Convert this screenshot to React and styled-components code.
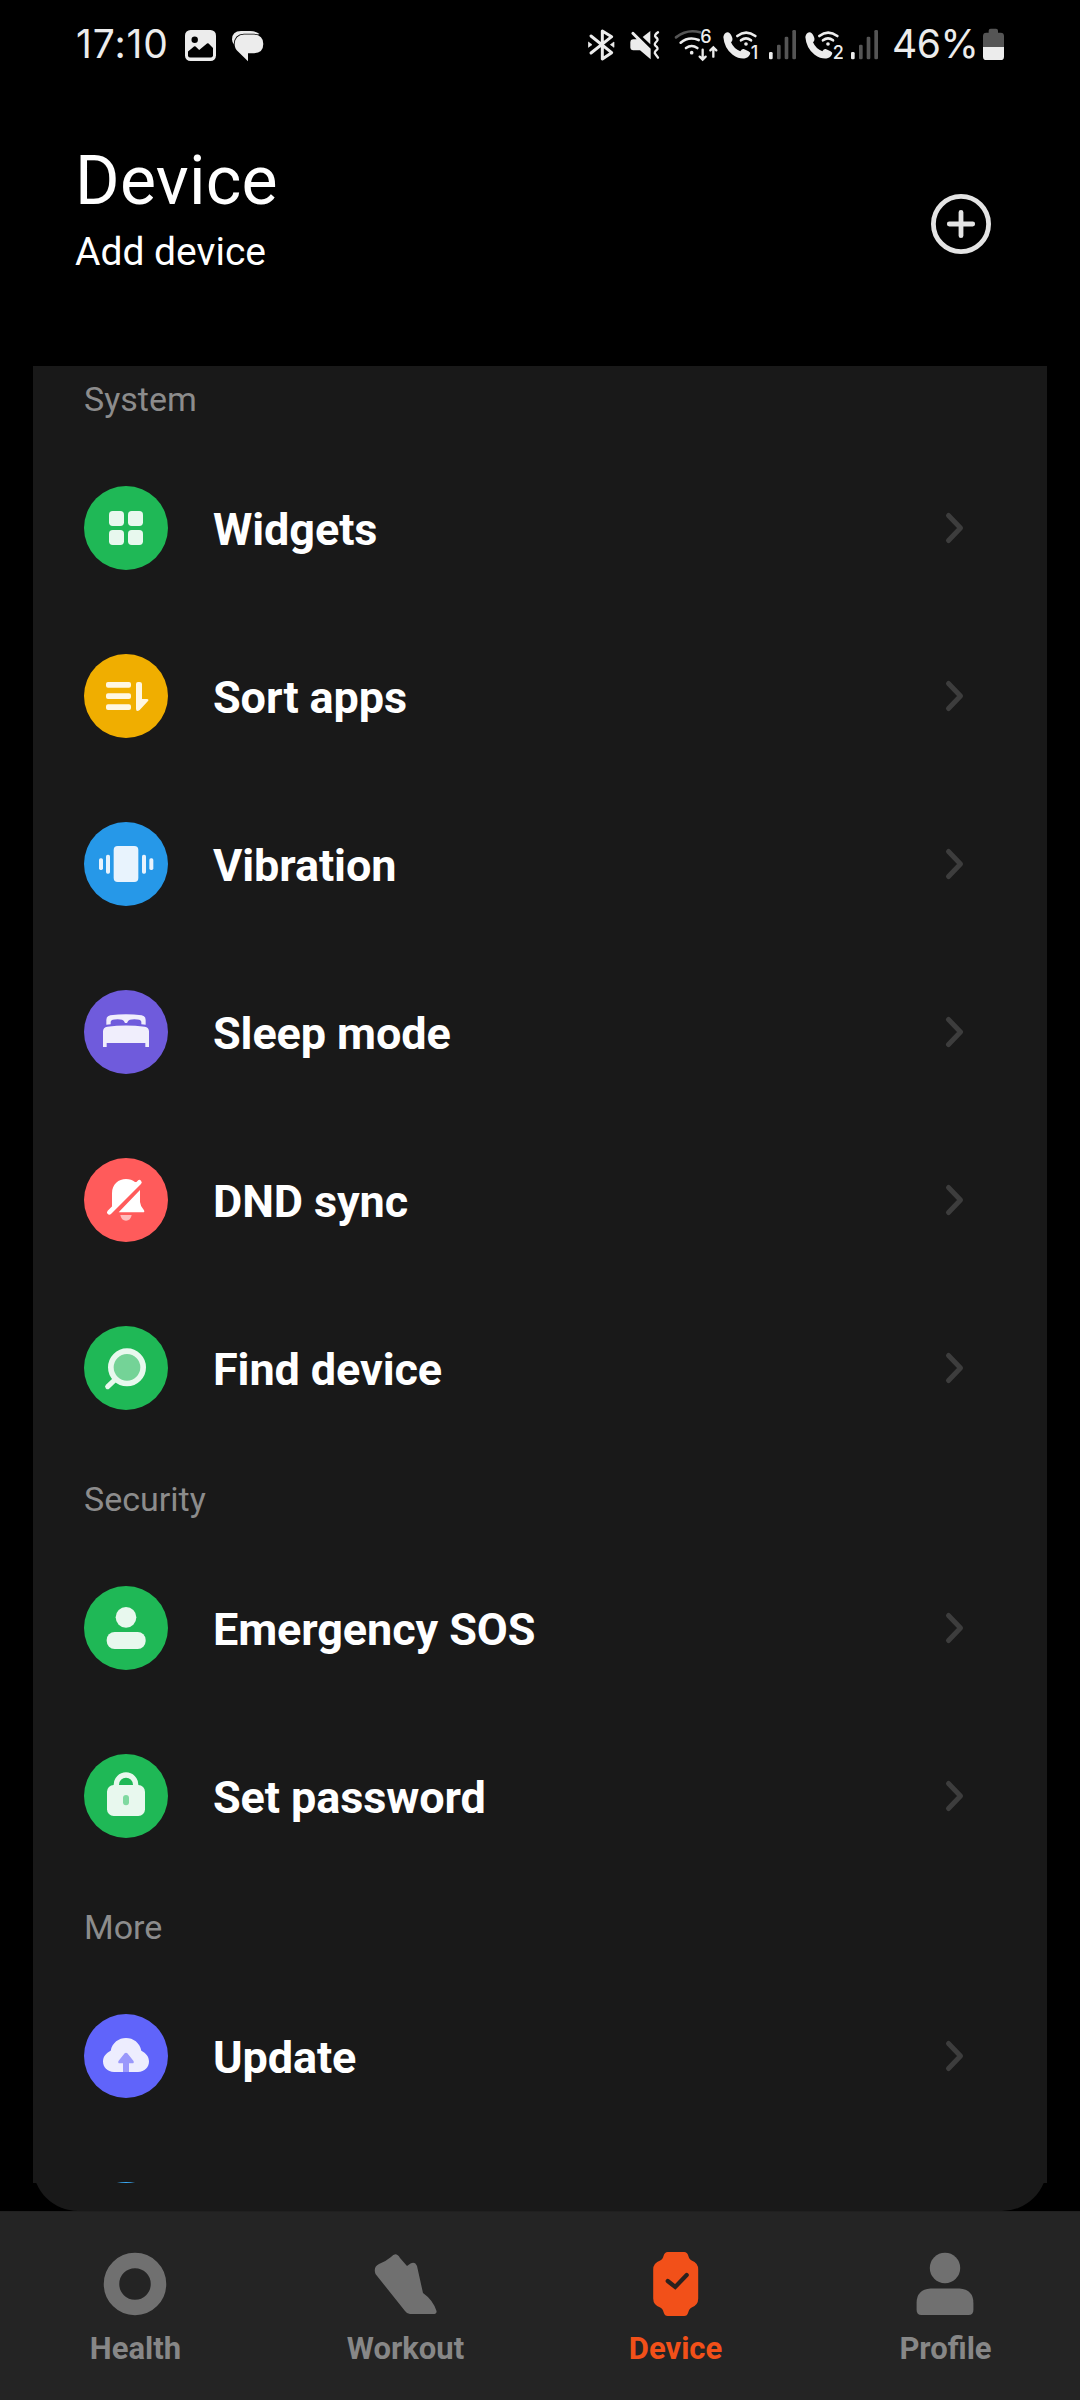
import React, { useState } from "react"
import styled, { createGlobalStyle } from "styled-components"

const GlobalStyle = createGlobalStyle`
   * { box-sizing: border-box; }
   body {
      margin: 0;
      background-color: #000;
      font-family: Roboto, "Liberation Sans", sans-serif;
   }
   svg { display: block; flex-shrink: 0; }
`

const LIGHT = "#ececec"
const DIM = "#555"
const MINT = "#e8f8ee"

/* ---------- status bar icons ---------- */

function Bluetooth() {
   return (
      <svg width="27" height="34" viewBox="84 84 81 102">
         <path
            d="M93 108L155 158L127 177V93L155 110L93 159"
            fill="none"
            stroke={LIGHT}
            strokeWidth="9"
            strokeLinecap="round"
            strokeLinejoin="round"
         />
         <path d="M85 126L96 134L85 142ZM162 126L151 134L162 142Z" fill={LIGHT} stroke={LIGHT} strokeWidth="2" strokeLinejoin="round" />
      </svg>
   )
}

function MuteVibrate() {
   return (
      <svg width="30" height="34" viewBox="210 84 90 102">
         <path d="M211 126Q211 119 219 118H230L214 101Q215 94 221 96L272 146V178L240 151H219Q211 150 211 143Z" fill={LIGHT} />
         <path d="M248 111L271 93V133Z" fill={LIGHT} />
         <path
            d="M294 97Q281 106 287 111Q296 118 291 123Q281 132 286 137Q296 144 291 149Q281 157 286 162L294 173"
            fill="none"
            stroke={LIGHT}
            strokeWidth="7"
            strokeLinecap="round"
         />
      </svg>
   )
}

function Wifi() {
   return (
      <svg width="45" height="48" viewBox="342 63 135 144">
         <g fill="none" strokeWidth="8" strokeLinecap="round">
            <path d="M348 112Q382 86 420 97" stroke={DIM} />
            <path d="M362 128Q386 108 416 120" stroke={LIGHT} />
            <path d="M378 144Q395 132 412 144" stroke={LIGHT} />
            <path d="M428 149V177M419 170L428 179L437 170M460 170V143M451 151L460 142L469 151" stroke={LIGHT} strokeWidth="7" />
         </g>
         <circle cx="395" cy="158" r="5.5" fill={LIGHT} />
         <IconDigit x="421" y="130">6</IconDigit>
      </svg>
   )
}

function WifiCall({ sim }) {
   return (
      <svg width="39" height="48" viewBox="486 63 117 144">
         <path
            d="M502 97Q492 99 490 111Q493 146 518 164Q538 178 556 175Q569 171 571 159Q570 155 551 147Q546 146 541 154Q522 147 513 127Q520 121 516 111Q511 97 502 97Z"
            fill={LIGHT}
         />
         <path d="M532 108Q558 88 586 108M543 121Q558 109 573 121" fill="none" stroke={LIGHT} strokeWidth="8" strokeLinecap="round" />
         <circle cx="558" cy="132" r="5.5" fill={LIGHT} />
         <IconDigit x="572" y="176">
            {sim}
         </IconDigit>
      </svg>
   )
}

function Signal() {
   return (
      <svg width="28" height="34" viewBox="624 84 84 102">
         <rect x="627" y="156" width="11" height="22" rx="4" fill={LIGHT} />
         <rect x="651" y="134" width="11" height="44" rx="4" fill={DIM} />
         <rect x="674" y="110" width="11" height="68" rx="4" fill={DIM} />
         <rect x="697" y="90" width="11" height="88" rx="4" fill={DIM} />
      </svg>
   )
}

function Battery() {
   return (
      <svg width="21" height="34" viewBox="1269 84 63 102">
         <path d="M1286 98V92Q1286 86 1292 86H1308Q1314 86 1314 92V98H1322Q1332 98 1332 108V141H1269V108Q1269 98 1279 98Z" fill={DIM} />
         <path d="M1269 141H1332V170Q1332 180 1322 180H1279Q1269 180 1269 170Z" fill={LIGHT} />
      </svg>
   )
}

function Picture() {
   return (
      <svg width="31" height="31" viewBox="0 0 31 31">
         <rect width="31" height="31" rx="5.5" fill={LIGHT} />
         <circle cx="9.7" cy="9.8" r="3.2" />
         <path d="M3 21.5L9 16.5Q9.8 16 10.6 16.6L14.2 20L22 13.5Q22.8 12.9 23.6 13.6L28 18V26Q27 27.5 25.5 27.5H5.5Q3.5 27.5 3 26Z" />
      </svg>
   )
}

function Message() {
   return (
      <svg width="33" height="33" viewBox="231 29 33 33">
         <path d="M234 44.5Q232 42 232 39.5Q232 31 241 31H250Q256 31 259.5 34Z" fill={LIGHT} />
         <path
            d="M244 34.5H254Q263.3 35 263.3 44Q263.3 53 254 53.3H248V61.2L238 51.5Q234.6 48.5 234.6 44Q235 35 244 34.5Z"
            fill={LIGHT}
            stroke="#000"
            strokeWidth="1.6"
            paintOrder="stroke"
         />
      </svg>
   )
}

/* ---------- list icons, drawn around the centre of the circle ---------- */

const icons = {
   widgets: (
      <g fill={MINT}>
         <rect x="-51" y="-51" width="45" height="45" rx="11" />
         <rect x="6" y="-51" width="45" height="45" rx="11" />
         <rect x="-51" y="6" width="45" height="45" rx="11" />
         <rect x="6" y="6" width="45" height="45" rx="11" />
      </g>
   ),
   sort: (
      <g fill="#fff7e3">
         <rect x="-60" y="-42" width="75" height="17" rx="6" />
         <rect x="-60" y="-8" width="75" height="17" rx="6" />
         <rect x="-60" y="25" width="75" height="17" rx="6" />
         <path d="M30 -36Q30 -42 36 -42H41Q48 -42 48 -36V9H63Q70 10 66 15L41 42Q30 49 30 38Z" />
      </g>
   ),
   vibration: (
      <g fill="#e8f3fd">
         <rect x="-37" y="-54" width="74" height="108" rx="12" />
         <rect x="-60" y="-28" width="12" height="57" rx="5" />
         <rect x="48" y="-28" width="12" height="57" rx="5" />
         <rect x="-81" y="-17" width="12" height="35" rx="5" />
         <rect x="70" y="-17" width="12" height="35" rx="5" />
      </g>
   ),
   sleep: (
      <g fill="#f0eefc">
         <path d="M-59 -22V-36Q-59 -48 -47 -50Q0 -57 47 -50Q59 -48 59 -36V-22L46 -23V-31Q44 -38 25 -38Q8 -38 6 -32L3 -27H-3L-6 -32Q-8 -38 -25 -38Q-44 -38 -46 -31V-23Z" />
         <path d="M-69 45V-2Q-69 -14 -56 -16Q0 -23 56 -16Q69 -14 69 -2V45H58V33H-58V45Z" />
      </g>
   ),
   dnd: (
      <g fill="#fff">
         <path d="M-42 30V-20C-42 -48 -22 -63 0 -63C11 -63 20 -60 27 -54L36 -53L40 -47L-42 34Z" />
         <path d="M-50 37L40 -53" stroke="#fff" strokeWidth="14" strokeLinecap="round" />
         <path d="M42 -30V6Q43 19 54 31Q57 37 51 37H-22Z" />
         <path d="M-17 45H17Q14 62 0 62Q-14 62 -17 45Z" opacity=".6" />
      </g>
   ),
   find: (
      <g>
         <path d="M-55 56L-32 34" stroke={MINT} strokeWidth="15" strokeLinecap="round" />
         <circle cx="3" cy="-2" r="48.5" fill="#74d397" stroke={MINT} strokeWidth="17" />
      </g>
   ),
   sos: (
      <g fill={MINT}>
         <circle cy="-32" r="31" />
         <rect x="-58" y="12" width="117" height="51" rx="24" />
      </g>
   ),
   password: (
      <g>
         <path d="M-29 -28V-34A29 29 0 0 1 29 -34V-28" fill="none" stroke={MINT} strokeWidth="16" />
         <rect x="-57" y="-33" width="114" height="93" rx="20" fill={MINT} />
         <rect x="-9" y="-3" width="18" height="31" rx="9" fill="#7fd9a0" />
      </g>
   ),
   update: (
      <g>
         <path
            d="M-36 48C-56 48 -69 34 -69 16C-69 2 -60 -9 -46 -16C-41 -40 -22 -54 0 -54C22 -54 41 -40 46 -16C60 -9 69 2 69 16C69 34 56 48 36 48Z"
            fill="#ededfe"
         />
         <path d="M-4 -8Q0 -12 4 -8L22 14Q26 21 19 22H9V48H-9V22H-19Q-26 21 -22 14Z" fill="#9a98fb" />
      </g>
   ),
}

const sections = [
   {
      title: "System",
      rows: [
         { label: "Widgets", icon: "widgets", color: "#1fb856" },
         { label: "Sort apps", icon: "sort", color: "#f0ae00" },
         { label: "Vibration", icon: "vibration", color: "#2698e8" },
         { label: "Sleep mode", icon: "sleep", color: "#6f5bdc" },
         { label: "DND sync", icon: "dnd", color: "#ff5b5b" },
         { label: "Find device", icon: "find", color: "#1fb856" },
      ],
   },
   {
      title: "Security",
      rows: [
         { label: "Emergency SOS", icon: "sos", color: "#1fb856" },
         { label: "Set password", icon: "password", color: "#1fb856" },
      ],
   },
   {
      title: "More",
      rows: [
         { label: "Update", icon: "update", color: "#6064fa" },
         { label: "", icon: "", color: "#3aa8f2" },
      ],
   },
]

const tabs = [
   {
      name: "Health",
      icon: <circle r="23.5" fill="none" stroke="currentColor" strokeWidth="15.5" />,
   },
   {
      name: "Workout",
      icon: (
         <path
            d="M-29.5 -10Q-32 -17 -26 -20Q-20 -22 -14 -27Q-9 -33 -5 -26L2 -18L5.5 -20.5Q10 -23 12 -18L18 9Q28 16 31.5 27Q32 30 28 30H5Q2 30 0 27Z"
            fill="currentColor"
         />
      ),
   },
   {
      name: "Device",
      icon: (
         <g transform="translate(0.7 0)">
            <path
               d="M-8 -32H8.5Q11.5 -32 12.5 -28.5Q13.5 -24.5 16 -23.5Q22.5 -21 22.5 -14.5V14.5Q22.5 21 16 23.5Q13.5 24.5 12.5 28.5Q11.5 32 8.5 32H-8Q-11 32 -12 28.5Q-13 24.5 -15.5 23.5Q-22.5 21 -22.5 14.5V-14.5Q-22.5 -21 -15.5 -23.5Q-13 -24.5 -12 -28.5Q-11 -32 -8 -32Z"
               fill="currentColor"
            />
            <path d="M-8 -3L-0.5 3L11 -9" fill="none" stroke="#2b211e" strokeWidth="4.2" strokeLinecap="round" />
         </g>
      ),
   },
   {
      name: "Profile",
      icon: (
         <g fill="currentColor">
            <circle cy="-16" r="15.2" />
            <path d="M-14.5 4.5H14.5Q28.4 5.5 28.4 19V26Q28.4 31 23.5 31H-23.5Q-28.4 31 -28.4 26V19Q-28.4 5.5 -14.5 4.5Z" />
         </g>
      ),
   },
]

function Row({ label, icon, color }) {
   return (
      <RowStyled>
         <Bubble $color={color}>
            <svg width="84" height="84" viewBox="-126 -126 252 252">
               {icons[icon]}
            </svg>
         </Bubble>
         <RowLabel>{label}</RowLabel>
         <svg width="24" height="36" viewBox="0 0 24 36">
            <path d="M5.5 5.5L17.5 18L5.5 30.5" fill="none" stroke="#3d3d3d" strokeWidth="5" strokeLinecap="round" strokeLinejoin="round" />
         </svg>
      </RowStyled>
   )
}

function App() {
   const [activeTab, setActiveTab] = useState("Device")

   return (
      <Screen>
         <GlobalStyle />
         <StatusBar>
            <Clock>17:10</Clock>
            <Picture />
            <Message />
            <StatusRight>
               <Bluetooth />
               <MuteVibrate />
               <Wifi />
               <WifiCall sim="1" />
               <Signal />
               <WifiCall sim="2" />
               <Signal />
               <Percent>46%</Percent>
               <Battery />
            </StatusRight>
         </StatusBar>
         <Header>
            <div>
               <Title>Device</Title>
               <Subtitle>Add device</Subtitle>
            </div>
            <AddButton aria-label="Add device">
               <svg width="60" height="60" viewBox="0 0 60 60" fill="none" stroke="#e4e4e4" strokeWidth="4.8" strokeLinecap="round">
                  <circle cx="30" cy="30" r="27.6" />
                  <path d="M18.3 30H41.7M30 18.3V41.7" />
               </svg>
            </AddButton>
         </Header>
         <Card>
            <List>
               {sections.map((section) => (
                  <section key={section.title}>
                     <SectionTitle>{section.title}</SectionTitle>
                     {section.rows.map((row) => (
                        <Row key={row.label} {...row} />
                     ))}
                  </section>
               ))}
            </List>
         </Card>
         <TabBar>
            {tabs.map((tab) => (
               <Tab key={tab.name} $active={tab.name === activeTab} onClick={() => setActiveTab(tab.name)}>
                  <svg width="72" height="72" viewBox="-36 -36 72 72">
                     {tab.icon}
                  </svg>
                  <span>{tab.name}</span>
               </Tab>
            ))}
         </TabBar>
      </Screen>
   )
}

const Screen = styled.div`
   display: flex;
   flex-direction: column;
   width: 1080px;
   height: 2400px;
   overflow: hidden;
   background-color: #000;
   color: #fff;
`

const StatusBar = styled.div`
   display: flex;
   align-items: center;
   height: 90px;
   padding: 0 76px 0 76px;
   color: ${LIGHT};
   font-family: Inter, Roboto, sans-serif;
   font-size: 39px;
   font-weight: 400;
`

const Clock = styled.span`
   width: 109px;
   padding-bottom: 3px;
   white-space: nowrap;
   letter-spacing: 0.9px;

   & + svg {
      margin-right: 15px;
   }
`

const StatusRight = styled.div`
   display: flex;
   align-items: center;
   margin-left: auto;

   svg:nth-child(2) { margin-left: 15px; }
   svg:nth-child(3) { margin-left: 14px; }
   svg:nth-child(4) { margin-left: 3px; }
   svg:nth-child(5) { margin-left: 7px; }
   svg:nth-child(6) { margin-left: 8px; }
   svg:nth-child(7) { margin-left: 7px; }
`

const Percent = styled.span`
   width: 105px;
   padding-left: 14px;
   padding-bottom: 3px;
   white-space: nowrap;
   letter-spacing: -0.5px;
`

const IconDigit = styled.text`
   fill: ${LIGHT};
   font-family: Inter, Roboto, sans-serif;
   font-size: 54px;
   font-weight: 500;
`

const Header = styled.header`
   display: flex;
   justify-content: space-between;
   align-items: flex-start;
   height: 276px;
   padding: 51px 89px 0 75px;
`

const Title = styled.h1`
   margin: 0;
   font-size: 68px;
   font-weight: 400;
   line-height: 80px;
   letter-spacing: 0.25px;
`

const Subtitle = styled.p`
   margin: 8px 0 0;
   font-size: 39px;
   line-height: 46px;
`

const AddButton = styled.button`
   margin-top: 53px;
   padding: 0;
   border: none;
   background: none;
   cursor: pointer;
`

const Card = styled.main`
   height: 1845px;
   margin: 0 33px;
   border-radius: 0 0 45px 45px;
   background-color: #191919;
`

const List = styled.div`
   display: flex;
   flex-direction: column;
   justify-content: flex-end;
   height: 1817px;
   overflow: hidden;
   background-color: #191919;

   section {
      flex-shrink: 0;
   }
   /* scrolled so that the last row is just peeking in */
   section:last-child {
      margin-bottom: -125px;
   }
`

const SectionTitle = styled.h2`
   height: 92px;
   margin: 0;
   padding: 3px 51px 0;
   color: #8c8c8c;
   font-size: 34px;
   font-weight: 400;
   line-height: 89px;
`

const RowStyled = styled.div`
   display: flex;
   align-items: center;
   height: 168px;
   padding: 0 80px 0 51px;
`

const Bubble = styled.div`
   width: 84px;
   height: 84px;
   border-radius: 50%;
   background-color: ${(props) => props.$color};
`

const RowLabel = styled.span`
   flex: 1;
   padding-top: 2px;
   padding-left: 45px;
   font-size: 45px;
   font-weight: 700;
   letter-spacing: -0.1px;
`

const TabBar = styled.nav`
   display: grid;
   grid-template-columns: repeat(4, 1fr);
   height: 189px;
   border-top: 1px solid #202020;
   background-color: #242424;
`

const Tab = styled.button`
   display: flex;
   flex-direction: column;
   align-items: center;
   padding: 36px 0 0;
   border: none;
   background: none;
   color: ${(props) => (props.$active ? "#f25019" : "#707070")};
   font-family: inherit;
   cursor: pointer;

   span {
      margin-top: 11px;
      padding-left: 1px;
      color: ${(props) => (props.$active ? "#f25019" : "#878787")};
      font-size: 31px;
      font-weight: 700;
      line-height: 36px;
   }
`

export default App
